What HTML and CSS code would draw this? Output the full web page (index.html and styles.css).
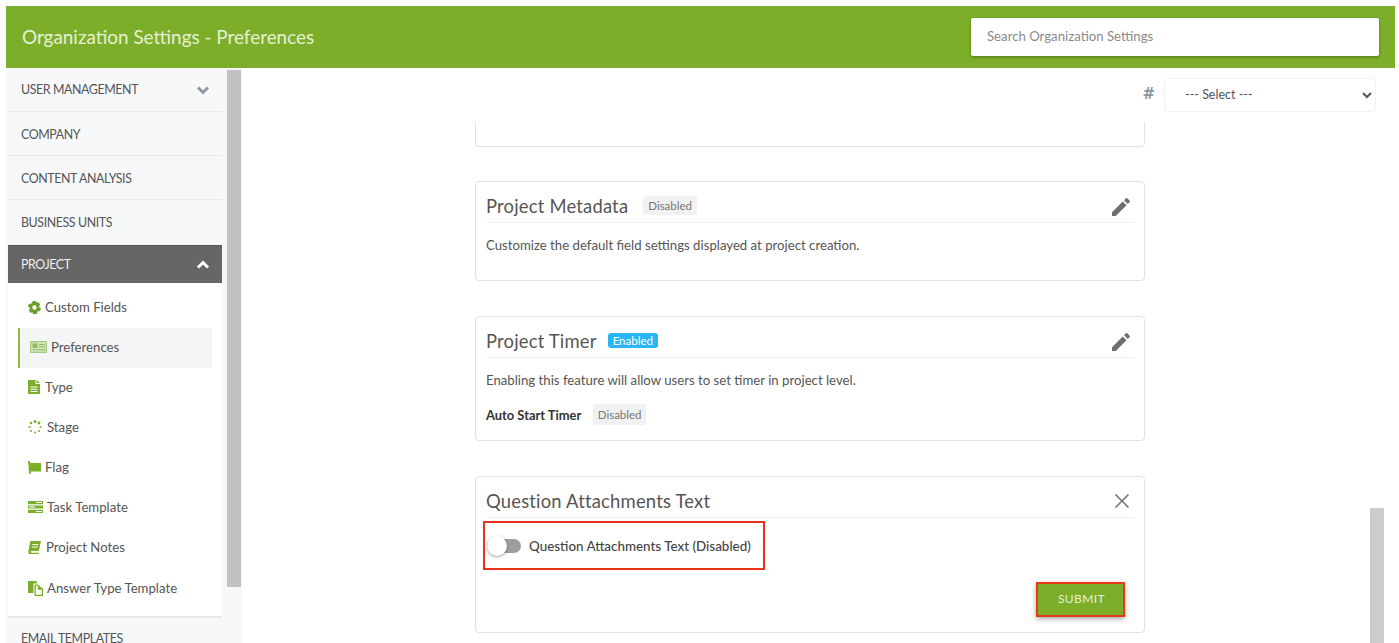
FILE: index.html
```html
<!DOCTYPE html>
<html lang="en">
<head>
<meta charset="utf-8">
<title>Organization Settings - Preferences</title>
<link rel="stylesheet" href="styles.css">
</head>
<body>
<div class="page">
  <header class="topbar">
    <h1 class="topbar-title">Organization Settings - Preferences</h1>
    <input class="search" type="text" placeholder="Search Organization Settings">
  </header>
  <div class="body-row">
    <aside class="sidebar">
      <nav class="nav">
        <div class="nav-item nav-first"><span>USER MANAGEMENT</span>
          <svg class="chev" viewBox="0 0 14 10"><path d="M2 2.5 7 7.5 12 2.5" fill="none" stroke="#8d9aa5" stroke-width="3"/></svg></div>
        <div class="nav-item nav-company"><span>COMPANY</span></div>
        <div class="nav-item nav-content"><span>CONTENT ANALYSIS</span></div>
        <div class="nav-item nav-bu"><span>BUSINESS UNITS</span></div>
        <div class="nav-active"><span>PROJECT</span>
          <svg class="chev" viewBox="0 0 14 10"><path d="M2 7.5 7 2.5 12 7.5" fill="none" stroke="#fff" stroke-width="3"/></svg></div>
        <div class="sub">
          <div class="sub-item">
            <svg class="ic" viewBox="0 0 14 14"><path fill="#6f9f2b" fill-rule="evenodd" d="M5.300 0h3.400l.4 2 1.800-.8 2.300 2.500-1.200 1.600.3 1.700 1.700 1-1 3-2-.2-1.200 1.300.1 1.900H5.300l-.4-2-1.800.8L.8 10.300 2 8.700 1.700 7 0 6l1-3 2 .2 1.200-1.300zM7 4.600a2.400 2.400 0 1 0 0 4.800 2.400 2.400 0 0 0 0-4.800z"/></svg>
            <span>Custom Fields</span></div>
          <div class="sub-item sub-current">
            <svg class="ic ic-wide" viewBox="0 0 17 12"><rect width="17" height="12" rx="1" fill="#a3ca7e"/><rect x="1.200" y="1.200" width="14.600" height="9.600" fill="#d3e5bf"/><path fill="#8fbc5c" d="M2.500 2.500h5v4.500h-5zM9 3h6v1H9zm0 2.200h6v1H9zM2.500 8.300h12.500v1H2.500z"/></svg>
            <span>Preferences</span></div>
          <div class="sub-item sub-type">
            <svg class="ic ic-narrow" viewBox="0 0 12 14"><path fill="#7cae2c" fill-rule="evenodd" d="M0 0h7.500v4H12v10H0zM8.500 0 12 3H8.500zM2.500 6.500v1h7v-1zm0 2.200v1h7v-1zm0 2.200v1h7v-1z"/></svg>
            <span>Type</span></div>
          <div class="sub-item sub-stage">
            <svg class="ic" viewBox="0 0 14 14"><g fill="#7cae2c"><circle cx="7" cy="1.500" r="1.500"/><circle cx="11" cy="3" r="1.400"/><circle cx="12.500" cy="7" r="1"/><circle cx="11" cy="11" r="1"/><circle cx="7" cy="12.500" r="1"/><circle cx="3" cy="11" r="1"/><circle cx="1.500" cy="7" r="1.100"/><circle cx="3" cy="3" r="1.200"/></g></svg>
            <span>Stage</span></div>
          <div class="sub-item">
            <svg class="ic ic-flag" viewBox="0 0 13 13"><path fill="#7cae2c" d="M0 0h1.800l.4 2h10.800v8.500H2.800V13H1.200z"/></svg>
            <span>Flag</span></div>
          <div class="sub-item sub-task">
            <svg class="ic" viewBox="0 0 15 12"><path fill="#7cae2c" fill-rule="evenodd" d="M0 0h15v3.200H0zm0 4.400h15v3.200H0zm0 4.400h15V12H0zM8 1v1h6V1zM1 5.500v1h6v-1zM8 9.900v1h6v-1z"/></svg>
            <span>Task Template</span></div>
          <div class="sub-item sub-notes">
            <svg class="ic ic-book" viewBox="0 0 13 13"><path fill="#7cae2c" fill-rule="evenodd" d="M3 0h10l-2.200 10H3.500a1 1 0 0 0 0 1.700H11l-.2 1.300H2C.5 13 0 11.800.300 10.500L2 1.500C2.200.5 2.500 0 3 0zm1.500 3-.2 1h6l.2-1zm-.5 2.500-.2 1h6l.2-1z"/></svg>
            <span>Project Notes</span></div>
          <div class="sub-item sub-answer">
            <svg class="ic" viewBox="0 0 15 15"><path fill="#7cae2c" fill-rule="evenodd" d="M0 0h8.500l.7 2.500H5.500V12H0zM6.500 3.500H10l5 4.500v7H6.500zm1.300 1.300v8.900h5.900V8.800H9.800v-4z"/></svg>
            <span>Answer Type Template</span></div>
        </div>
        <div class="nav-item nav-last"><span>EMAIL TEMPLATES</span></div>
      </nav>
      <div class="side-track"><div class="side-thumb"></div></div>
    </aside>

    <main class="main">
      <div class="filter">
        <span class="hash">#</span>
        <select class="select"><option>--- Select ---</option></select>
      </div>
      <div class="cards">
        <section class="card card-cut"></section>

        <section class="card card-meta">
          <div class="card-head">
            <h2 class="card-title">Project Metadata</h2>
            <span class="badge">Disabled</span>
            <svg class="pencil" viewBox="0 0 20 20"><path fill="#6e6e6e" d="M1 15.200V19h3.800L15.500 8.300l-3.800-3.800zM18.700 5.100a1 1 0 0 0 0-1.400L16.300 1.300a1 1 0 0 0-1.400 0L13 3.200 16.800 7z"/></svg>
          </div>
          <p class="card-text">Customize the default field settings displayed at project creation.</p>
        </section>

        <section class="card card-timer">
          <div class="card-head">
            <h2 class="card-title">Project Timer</h2>
            <span class="badge badge-on">Enabled</span>
            <svg class="pencil" viewBox="0 0 20 20"><path fill="#6e6e6e" d="M1 15.200V19h3.800L15.500 8.300l-3.800-3.800zM18.700 5.100a1 1 0 0 0 0-1.400L16.300 1.300a1 1 0 0 0-1.400 0L13 3.200 16.800 7z"/></svg>
          </div>
          <p class="card-text">Enabling this feature will allow users to set timer in project level.</p>
          <div class="auto-row"><strong class="auto-label">Auto Start Timer</strong><span class="badge">Disabled</span></div>
        </section>

        <section class="card card-form">
          <div class="card-head">
            <h2 class="card-title">Question Attachments Text</h2>
            <svg class="close" viewBox="0 0 16 16"><path d="M1.500 1.500 14.500 14.500M14.500 1.500 1.500 14.500" stroke="#777" stroke-width="1.700" fill="none"/></svg>
          </div>
          <div class="toggle-box">
            <span class="toggle"><span class="knob"></span></span>
            <span class="toggle-label">Question Attachments Text (Disabled)</span>
          </div>
          <div class="actions"><button class="submit" type="button">SUBMIT</button></div>
        </section>
      </div>
      <div class="main-thumb"></div>
    </main>
  </div>
</div>
</body>
</html>
```

FILE: styles.css
```css
* { box-sizing: border-box; }
html, body { margin: 0; height: 100%; overflow: hidden; background: #fff; }
body { font-family: "Lato", "Noto Sans", sans-serif; color: #444; }
.page { padding: 6px 4px 0 6px; height: 643px; display: flex; flex-direction: column; }

.topbar { flex: none; height: 62px; background: #7cae2a; display: flex; align-items: center; justify-content: space-between; padding: 0 16px; }
.topbar-title { margin: 0 0 2px; font-size: 18.900px; font-weight: 400; color: #e6f0d4; }
.search { width: 408px; height: 38px; margin-top: -1px; border: 0; border-radius: 2px; background: #fff; padding: 0 16px 2px; font: 13.200px "Lato", sans-serif; box-shadow: 0 1px 3px rgba(0,0,0,.35); }
.search::placeholder { color: #8a8a8a; opacity: 1; }

.body-row { flex: 1; display: flex; min-height: 0; }
.sidebar { flex: none; width: 236px; display: flex; background: #f7f8fa; }
.nav { width: 214px; margin-left: 2px; flex: none; }
.nav-item { height: 44px; padding: 0 12px 0 13px; display: flex; align-items: center; justify-content: space-between; font-size: 12.400px; letter-spacing: -.4px; color: #555; border-bottom: 1px solid #e6e8ea; }
.nav-company, .nav-content { padding-top: 2px; }
.nav-bu { height: 45px; border-bottom: 0; }
.nav-last { border-bottom: 0; padding-bottom: 4px; }
.nav-active { height: 38px; padding: 0 12px 0 13px; display: flex; align-items: center; justify-content: space-between; background: #666; color: #f0f0f0; font-size: 12.400px; letter-spacing: -.4px; border-top: 1px solid #555; }
.chev { width: 14px; height: 10px; }
.sub { background: #fff; padding: 5px 10px 8px; height: 335px; border-bottom: 2px solid #e6e8ea; }
.sub-item { height: 40px; padding: 0 0 2px 10px; display: flex; align-items: center; gap: 4px; font-size: 13.200px; color: #555; }
.sub-current { background: #f5f5f5; border-left: 2px solid #8dbb45; }
.ic { width: 13px; height: 13px; flex: none; }
.ic-wide { width: 17px; height: 12px; }
.ic-narrow { width: 12px; height: 14px; }
.ic-flag { width: 13px; height: 13px; }
.sub-type { gap: 5px; }
.sub-stage { gap: 5px; }
.sub-task { gap: 4px; }
.sub-notes { gap: 5px; }
.sub-answer { padding-bottom: 0; }
.sub-task .ic { width: 15px; height: 12px; }
.sub-answer .ic { width: 15px; height: 15px; }
.sub-stage .ic { width: 14px; height: 14px; }
.side-track { width: 15px; margin-left: 5px; }
.side-thumb { width: 14px; height: 517px; margin-top: 2px; background: #c1c2c4; }

.main { flex: 1; min-width: 0; position: relative; display: flex; flex-direction: column; }
.filter { flex: none; height: 54px; display: flex; justify-content: flex-end; align-items: flex-start; padding: 10px 19px 0 0; gap: 9px; }
.hash { font: 700 15px/32px "DejaVu Sans", sans-serif; color: #8a97a2; }
.select { width: 212px; height: 34px; border: 1px solid #f0f2f4; border-radius: 4px; background: #fff; color: #555; padding: 0 16px 2px; font: 12.500px "Lato", sans-serif; }
.cards { width: 670px; margin-left: 233px; }
.card { background: #fff; border: 1px solid #dfe3e8; border-radius: 4px; padding: 0 10px; margin-bottom: 35px; }
.card-cut { height: 25px; margin-bottom: 34px; border-top: 0; border-top-left-radius: 0; border-top-right-radius: 0; }
.card-meta { height: 100px; }
.card-timer { height: 125px; }
.card-form { height: 157px; }
.card-head { height: 41px; display: flex; align-items: center; gap: 15px; border-bottom: 1px solid #eef0f2; padding-top: 7px; }
.card-title { margin: 0; font-size: 18.400px; font-weight: 400; color: #555; letter-spacing: .2px; }
.badge { font-size: 11.500px; line-height: 19px; padding: 0 5px; border-radius: 3px; background: #f1f1f1; color: #777; }
.badge-on { background: #29b6f6; color: #fff; line-height: 15px; margin-left: -4px; }
.pencil { width: 20px; height: 20px; margin: 2px 3px 0 auto; }
.close { width: 16px; height: 16px; margin-left: auto; margin-right: 4px; }
.card-text { margin: 14px 0 0; font-size: 13.200px; color: #555; }
.auto-row { display: flex; align-items: center; gap: 12px; margin-top: 16px; }
.auto-label { font-size: 12.900px; font-weight: 700; color: #333; }
.auto-row .badge { line-height: 21px; padding: 0 4.500px; }
.toggle-box { width: 282px; height: 49px; margin: 3px 0 0 -3px; border: 2px solid #e8321a; display: flex; align-items: center; padding-left: 2px; }
.toggle { width: 34px; height: 14px; border-radius: 7px; background: #9e9e9e; position: relative; flex: none; }
.knob { position: absolute; left: 0; top: -3px; width: 20px; height: 20px; border-radius: 50%; background: #fff; box-shadow: 0 1px 3px rgba(0,0,0,.4); }
.toggle-label { margin-left: 8px; font-size: 13.400px; font-weight: 500; color: #444; }
.actions { display: flex; justify-content: flex-end; margin-top: 12px; padding-right: 9px; }
.submit { width: 89px; height: 35px; border: 2px solid #e8391a; background: #7cae2a; color: #e6f0d4; font: 12px "Lato", sans-serif; letter-spacing: .4px; box-shadow: 0 2px 5px rgba(0,0,0,.35); padding: 0 0 2px 2px; }
.main-thumb { position: absolute; right: 11px; top: 440px; width: 14px; height: 135px; background: #ccc; }
```
